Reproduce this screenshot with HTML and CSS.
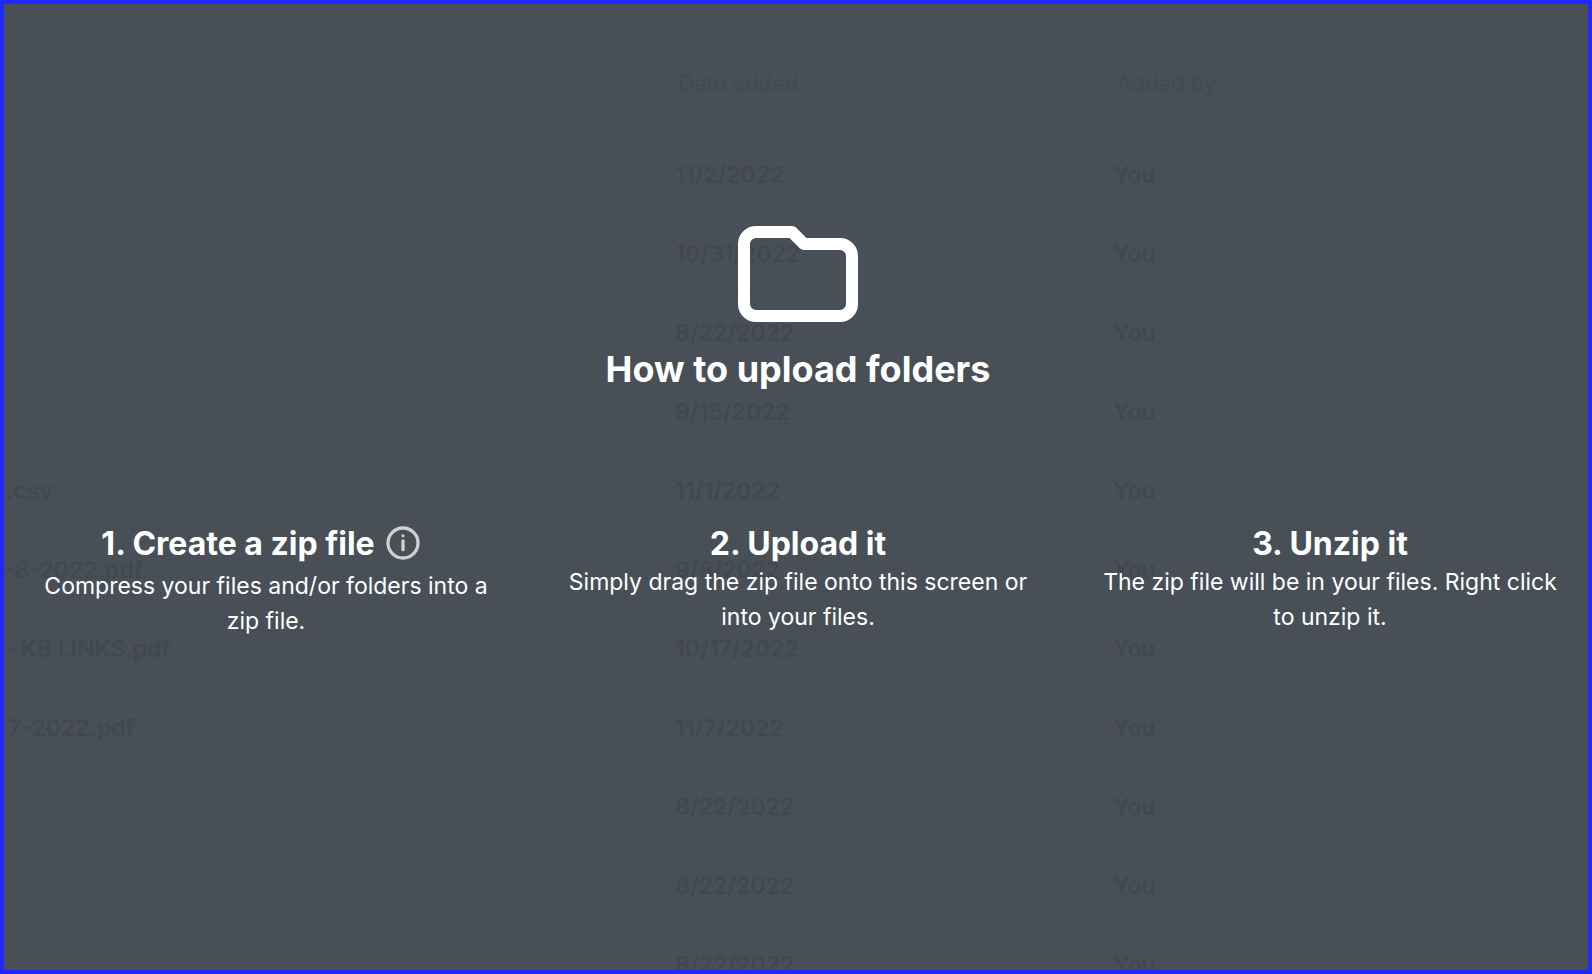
FILE: index.html
```
<!DOCTYPE html>
<html lang="en">
<head>
    <meta charset="UTF-8">
    <meta name="viewport" content="width=device-width, initial-scale=1.0">
    <title>How to upload folders</title>
    <link rel="stylesheet" href="styles.css">
</head>
<body>
    <div class="drop-area">
        <!-- file list, dimmed behind the help overlay -->
        <table class="files">
            <thead>
                <tr><th class="name"></th><th class="date">Date added</th><th>Added by</th></tr>
            </thead>
            <tbody>
                <tr><td></td><td>11/2/2022</td><td>You</td></tr>
                <tr><td></td><td>10/31/2022</td><td>You</td></tr>
                <tr><td></td><td>8/22/2022</td><td>You</td></tr>
                <tr><td></td><td>9/15/2022</td><td>You</td></tr>
                <tr><td class="cut">t.csv</td><td>11/1/2022</td><td>You</td></tr>
                <tr><td>-8-2022.pdf</td><td>9/8/2022</td><td>You</td></tr>
                <tr><td>- KB LINKS.pdf</td><td>10/17/2022</td><td>You</td></tr>
                <tr><td class="cut">-7-2022.pdf</td><td>11/7/2022</td><td>You</td></tr>
                <tr><td></td><td>8/22/2022</td><td>You</td></tr>
                <tr><td></td><td>8/22/2022</td><td>You</td></tr>
                <tr><td></td><td>8/22/2022</td><td>You</td></tr>
            </tbody>
        </table>

        <div class="overlay">
            <svg class="folder" viewBox="0 0 24 24" aria-hidden="true">
                <path d="M5 5h6l2 2h6a2 2 0 0 1 2 2v8a2 2 0 0 1-2 2H5a2 2 0 0 1-2-2V7a2 2 0 0 1 2-2z"/>
            </svg>
            <h1>How to upload folders</h1>
            <div class="steps">
                <div class="step with-info">
                    <h2>1. Create a zip file
                        <button class="info" type="button" aria-label="More about zip files">
                            <svg viewBox="0 0 24 24" aria-hidden="true">
                                <circle cx="12" cy="12" r="9"/>
                                <path d="M12 10.7v5.3M12 7.7v0"/>
                            </svg>
                        </button>
                    </h2>
                    <p>Compress your files and/or folders into a zip file.</p>
                </div>
                <div class="step">
                    <h2>2. Upload it</h2>
                    <p>Simply drag the zip file onto this screen or into your files.</p>
                </div>
                <div class="step">
                    <h2>3. Unzip it</h2>
                    <p>The zip file will be in your files. Right click to unzip it.</p>
                </div>
            </div>
        </div>
    </div>
</body>
</html>
```
FILE: styles.css
```
* {
    box-sizing: border-box;
}
body {
    margin: 0;
    font-family: Inter, "Liberation Sans", sans-serif;
    font-size: 23px;
    color: white;
}
.drop-area {
    position: relative;
    height: 100vh;
    overflow: hidden;
    border: 4px solid #1e28ff;
    background-color: #484f57;
}
.files {
    width: 100%;
    margin-top: 26px;
    table-layout: fixed;
    border-collapse: collapse;
    border-top: 1px solid #464d55;
    color: #41484f;
}
.files th, .files td {
    padding: 0 6px;
    text-align: left;
    white-space: nowrap;
    border-bottom: 1px solid #464d55;
}
.files th {
    height: 105px;
    padding: 0 9px;
    font-size: 22px;
    font-weight: 400;
    color: #434a51;
}
.files td {
    height: 79px;
    font-weight: 600;
}
.files td:first-child {
    padding: 0;
}
/* names whose first letter runs under the left edge */
.files .cut {
    text-indent: -6px;
}
.name {
    width: 42%;
}
.date {
    width: 438px;
}
.overlay {
    position: absolute;
    inset: 0;
    padding: 198px 20px 0 24px;
    text-align: center;
}
.folder {
    display: block;
    width: 144px;
    height: 144px;
    margin: 0 auto;
    fill: none;
    stroke: white;
    stroke-width: 2;
    stroke-linejoin: round;
}
h1 {
    margin: 0;
    font-size: 36px;
    line-height: 46px;
    font-weight: 700;
}
.steps {
    display: grid;
    grid-template-columns: repeat(3, 1fr);
    gap: 56px;
    margin-top: 133px;
}
.step h2 {
    display: flex;
    align-items: center;
    justify-content: center;
    height: 36px;
    margin: 0 0 4px;
    font-size: 32px;
    font-weight: 700;
}
.step p {
    margin: 0;
    line-height: 35px;
}
.with-info h2 {
    margin-bottom: 8px;
}
.info {
    width: 40px;
    height: 40px;
    margin: 0 8px;
    padding: 0;
    border: none;
    background: none;
    cursor: pointer;
}
.info svg {
    display: block;
    fill: none;
    stroke: #cfcfcf;
    stroke-width: 2;
    stroke-linecap: round;
}
```
